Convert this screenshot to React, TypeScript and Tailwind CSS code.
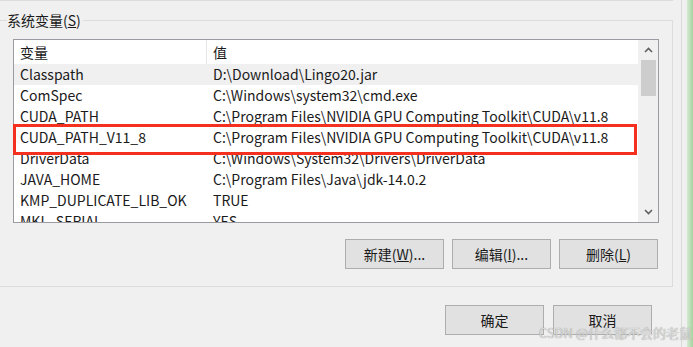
import type { ReactNode } from 'react';

interface EnvVar {
  name: string;
  value: string;
}

const vars: EnvVar[] = [
  { name: 'Classpath', value: 'D:\\Download\\Lingo20.jar' },
  { name: 'ComSpec', value: 'C:\\Windows\\system32\\cmd.exe' },
  { name: 'CUDA_PATH', value: 'C:\\Program Files\\NVIDIA GPU Computing Toolkit\\CUDA\\v11.8' },
  { name: 'CUDA_PATH_V11_8', value: 'C:\\Program Files\\NVIDIA GPU Computing Toolkit\\CUDA\\v11.8' },
  { name: 'DriverData', value: 'C:\\Windows\\System32\\Drivers\\DriverData' },
  { name: 'JAVA_HOME', value: 'C:\\Program Files\\Java\\jdk-14.0.2' },
  { name: 'KMP_DUPLICATE_LIB_OK', value: 'TRUE' },
  { name: 'MKL_SERIAL', value: 'YES' },
];

const font = { fontFamily: '"Noto Sans CJK SC", "Noto Sans", sans-serif' };

const WinButton = ({ children }: { children: ReactNode }) => (
  <button
    type="button"
    className="w-[99px] h-[30px] flex items-center justify-center bg-[#e1e1e1] border border-[#adadad] text-[14px] text-[#1a1a1a]"
  >
    {children}
  </button>
);

const Chevron = ({ up }: { up?: boolean }) => (
  <svg width="9" height="6" viewBox="0 0 9 6" className="block">
    <path
      d={up ? 'M1 5 L4.5 1.5 L8 5' : 'M1 1 L4.5 4.5 L8 1'}
      fill="none"
      stroke="#606060"
      strokeWidth="1.6"
    />
  </svg>
);

export default function App() {
  return (
    <div className="flex w-[693px] h-[347px] bg-[#f0f0f0] overflow-hidden relative" style={font}>
      <div className="w-[681px] flex flex-col">
        <div className="h-px w-[673px] bg-[#dcdcdc]" />

        <fieldset className="mt-[9px] w-[673px] border-t border-r border-b border-[#dcdcdc] flex flex-col">
          <legend className="ml-[7px] pr-[2px] text-[14px] leading-[20px] text-[#1a1a1a]">
            系统变量(<span className="underline">S</span>)
          </legend>

          <div className="ml-[13px] mt-[9px] w-[646px] h-[184px] border border-[#9a9aa2] bg-white flex overflow-hidden">
            <div className="flex-1 flex flex-col text-[14px] text-[#1a1a1a]">
              <div className="h-[24px] flex shrink-0">
                <div className="w-[193px] pl-[6px] border-r border-[#e5e5e5] flex items-center">变量</div>
                <div className="flex-1 pl-[6px] flex items-center">值</div>
              </div>
              {vars.map((v, i) => (
                <div
                  key={v.name}
                  className={`h-[21px] shrink-0 flex items-center ${i === 0 ? 'bg-[#f0f0f0]' : ''}`}
                >
                  <div className="w-[193px] pl-[6px] whitespace-nowrap">{v.name}</div>
                  <div className="flex-1 pl-[6px] whitespace-nowrap">{v.value}</div>
                </div>
              ))}
            </div>
            <div className="w-[20px] bg-[#f0f0f0] flex flex-col items-center">
              <div className="h-[20px] flex items-center justify-center">
                <Chevron up />
              </div>
              <div className="w-[15px] h-[36px] bg-[#cdcdcd]" />
              <div className="flex-1" />
              <div className="h-[20px] flex items-center justify-center">
                <Chevron />
              </div>
            </div>
          </div>

          <div className="mt-[16px] mb-[17px] mr-[14px] flex justify-end gap-[8px]">
            <WinButton>
              新建(<span className="underline">W</span>)...
            </WinButton>
            <WinButton>
              编辑(<span className="underline">I</span>)...
            </WinButton>
            <WinButton>
              删除(<span className="underline">L</span>)
            </WinButton>
          </div>
        </fieldset>

        <div className="mt-[18px] w-[652px] flex justify-end gap-[9px]">
          <WinButton>确定</WinButton>
          <WinButton>取消</WinButton>
        </div>
      </div>

      <div className="w-px bg-[#dadada]" />
      <div className="w-[5px]" />
      <div className="flex-1 bg-gradient-to-r from-[#d5e9d2] to-[#a5d3a0]" />

      {/* red annotation box */}
      <div className="absolute left-[13px] top-[124px] w-[624px] h-[31px] border-[3px] border-[#f5301e]" />

      {/* watermark */}
      <div className="absolute right-[1px] bottom-[5px] text-[13px] leading-[18px] text-[#dadada] whitespace-nowrap [text-shadow:0_0_1px_#8a8a8a]">
        CSDN @什么都不会的老鼠
      </div>
    </div>
  );
}
